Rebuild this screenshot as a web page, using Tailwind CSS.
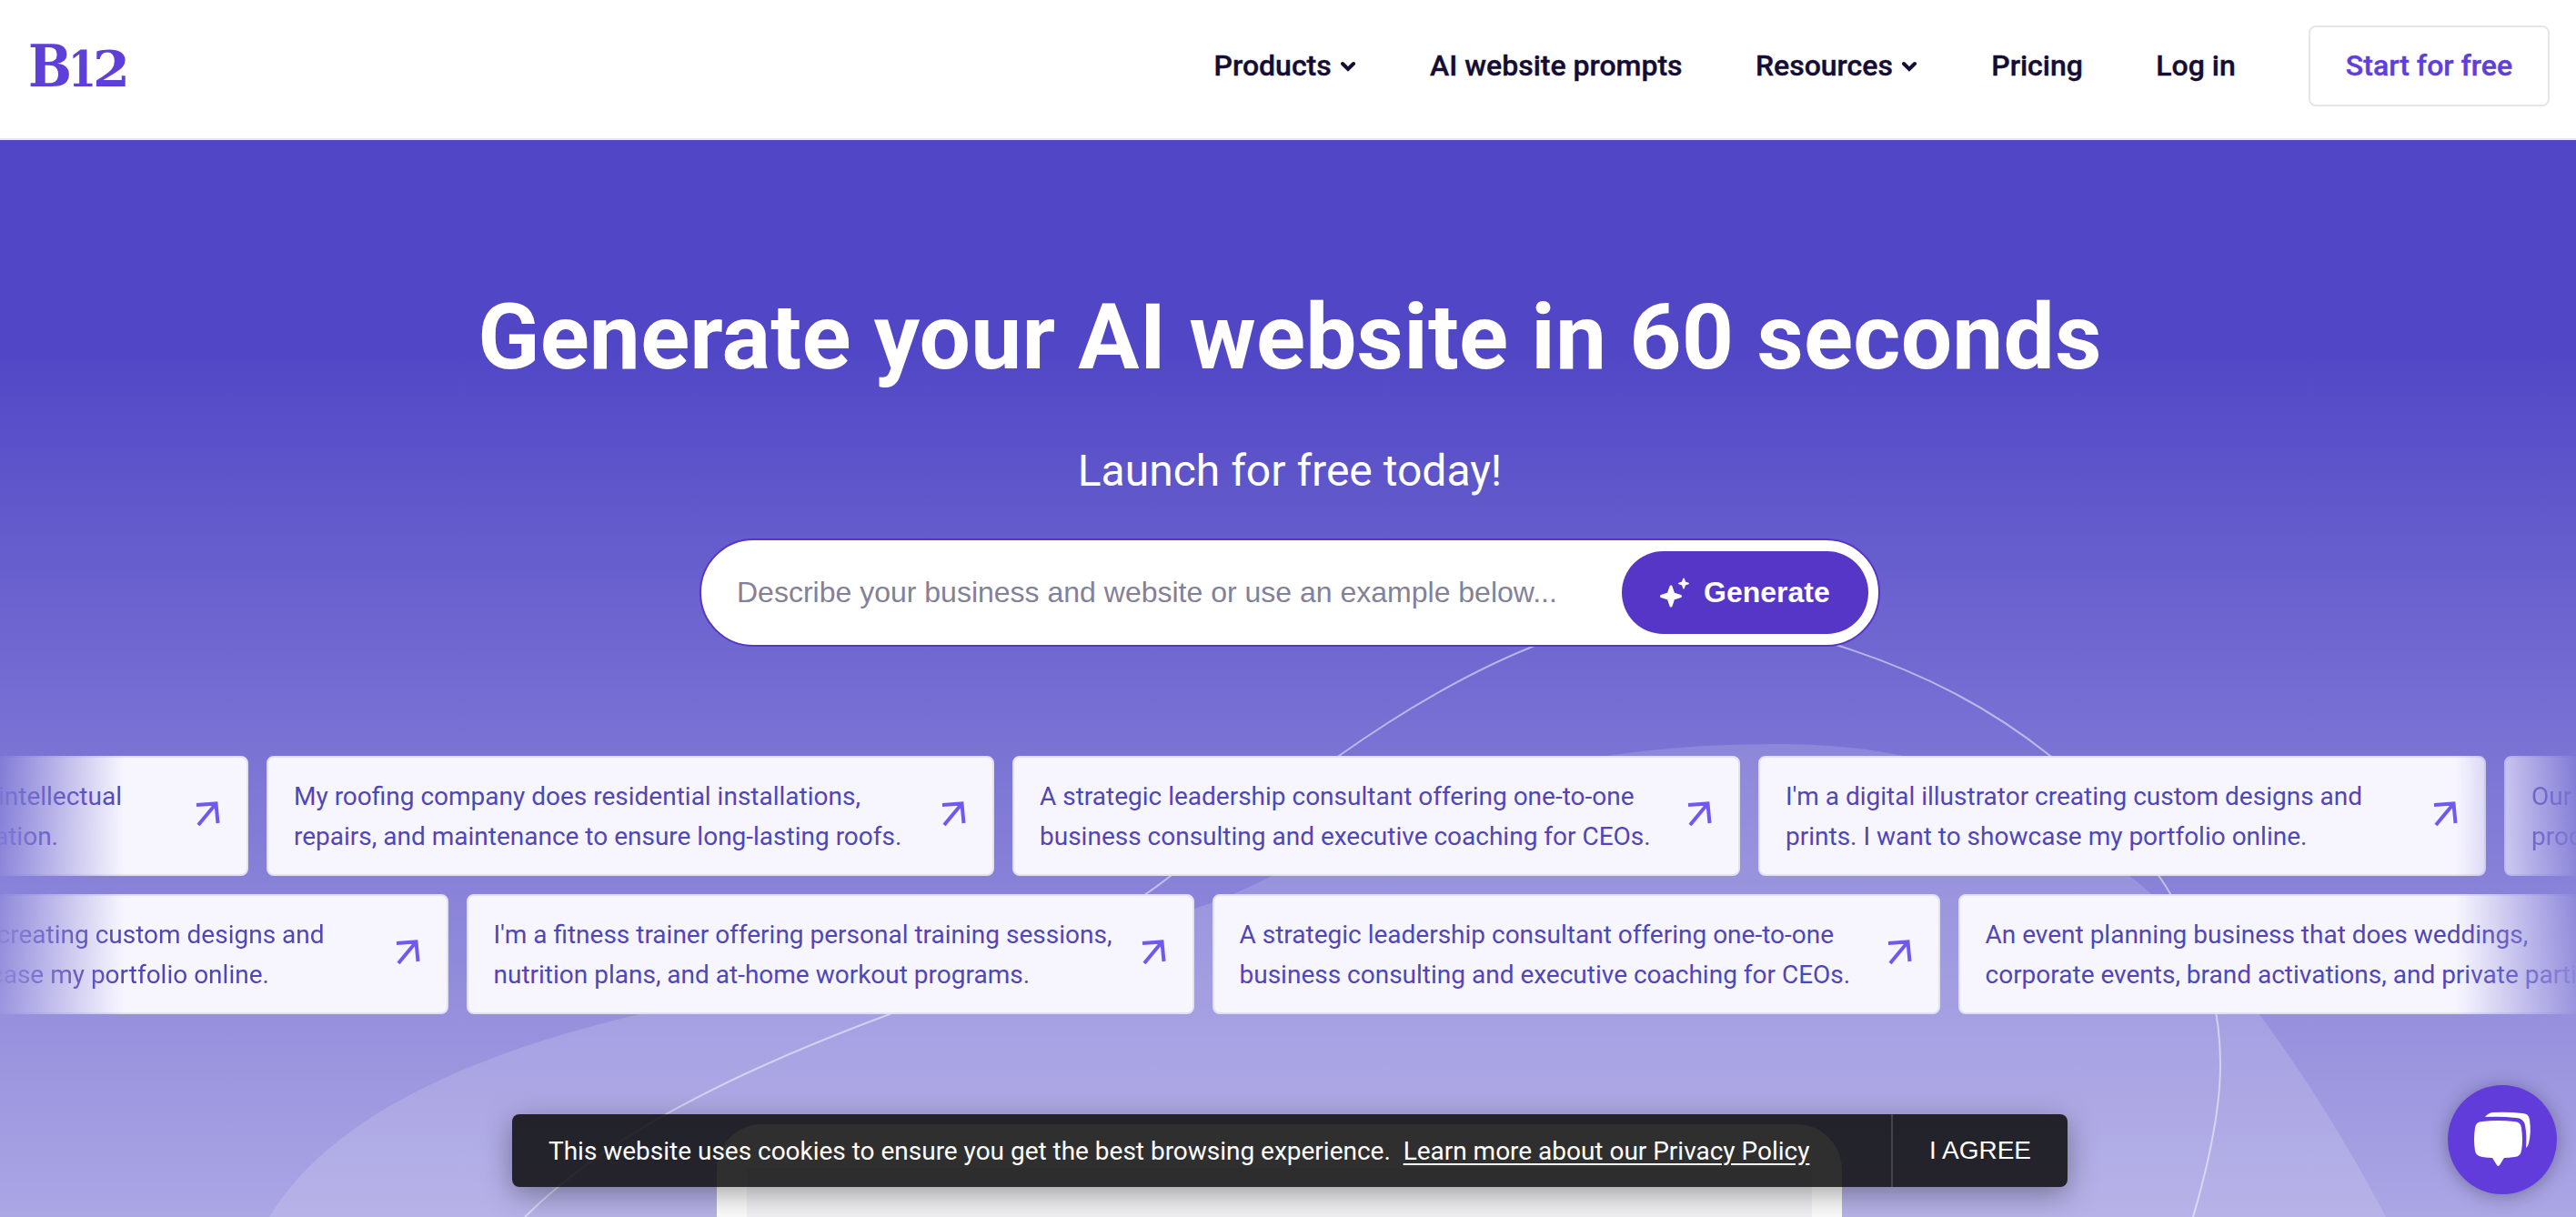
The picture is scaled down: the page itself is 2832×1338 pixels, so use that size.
<!DOCTYPE html>
<html lang="en">

<head>
    <meta charset="UTF-8">
    <meta name="viewport" content="width=device-width, initial-scale=1.0">
    <title>B12 | AI website builder</title>
    <script src="https://cdn.jsdelivr.net/npm/@tailwindcss/browser@4"></script>
</head>

<body class="font-['Roboto',sans-serif] w-[2832px] h-[1338px] overflow-hidden relative flex flex-col">
    <!-- Navbar -->
    <header class="h-[154px] shrink-0 bg-white border-b-2 border-[#e6e6e6] flex items-start justify-between pl-8 pr-[29px] pt-7">
        <svg class="w-[112px] h-[84px]" viewBox="32 28 112 84" role="img" aria-label="B12" font-family="DejaVu Serif" font-weight="bold" fill="#5f3fd9">
            <text x="31" y="95" font-size="63" textLength="48" lengthAdjust="spacingAndGlyphs">B</text>
            <text x="75" y="95" font-size="55" textLength="31" lengthAdjust="spacingAndGlyphs">1</text>
            <text x="102" y="95" font-size="55" textLength="41" lengthAdjust="spacingAndGlyphs">2</text>
        </svg>
        <nav class="flex items-center gap-[80.3px] h-[89px] text-[32px] font-medium text-[#150d33] [-webkit-text-stroke:0.4px]">
            <a class="flex items-center gap-[10px] -mt-[2px]">Products
                <svg class="w-[18px] h-3 mt-[2px]" viewBox="0 0 18 12" fill="none" stroke="currentColor" stroke-width="4" stroke-linecap="round"><path d="M2 3l6 6 6-6" /></svg>
            </a>
            <a class="-mt-[2px]">AI website prompts</a>
            <a class="flex items-center gap-[10px] -mt-[2px]">Resources
                <svg class="w-[18px] h-3 mt-[2px]" viewBox="0 0 18 12" fill="none" stroke="currentColor" stroke-width="4" stroke-linecap="round"><path d="M2 3l6 6 6-6" /></svg>
            </a>
            <a class="-mt-[2px]">Pricing</a>
            <a class="-mt-[2px]">Log in</a>
            <a class="h-[89px] w-[265px] flex items-center justify-center border-2 border-[#e6e6e6] rounded-lg pb-[2px] text-[#5f3fd9]">Start for free</a>
        </nav>
    </header>

    <!-- Hero -->
    <main class="relative flex-1 overflow-hidden flex flex-col items-center pl-1 bg-[linear-gradient(#5046c6_0px,#5046c6_220px,#aba6e4_1184px)]">
        <svg class="absolute left-0 top-0 w-[2832px] h-[1184px]" viewBox="0 154 2832 1184" fill="none">
            <path d="M296 1338C355 1240 490 1165 703 1115C1050 1045 1230 1050 1398 963C1560 870 1720 818 1955 818C2110 818 2240 860 2341 963C2435 1035 2540 1180 2623 1338Z" fill="#fff" fill-opacity=".15" />
            <path d="M577 1338C660 1255 790 1185 978 1115C1130 1058 1200 1030 1287 963L1472 831C1540 783 1620 735 1700 705C1800 670 1950 685 2025 711C2120 742 2190 780 2254 831C2400 960 2441 1070 2441 1170C2441 1220 2428 1280 2411 1338" stroke="#fff" stroke-opacity=".5" stroke-width="2" />
        </svg>

        <h1 class="relative mt-[157px] text-[100px] leading-[120px] tracking-[0.22px] font-bold text-white">Generate your AI website in 60 seconds</h1>
        <p class="relative mt-[57px] text-[48px] leading-[60px] text-white">Launch for free today!</p>

        <div class="relative mt-[44px] w-[1298px] h-[119px] rounded-full border-2 border-[#5636c6] bg-white flex items-center justify-between pl-[39px] pr-[11px] font-['Liberation_Sans',sans-serif] text-[32px]">
            <span class="text-[#83819a] -mt-[2px]">Describe your business and website or use an example below...</span>
            <button class="w-[271px] h-[91px] rounded-full bg-[#5636c6] text-white font-bold flex items-center pl-[41px]">
                <svg class="w-9 h-9 mr-[13px]" viewBox="0 0 36 36" fill="#fff" stroke="#fff" stroke-linejoin="round">
                    <path stroke-width="3" d="M13 11l2.700 7.800L23.500 21.500l-7.800 2.700L13 32l-2.700-7.800L2.500 21.500l7.800-2.700z" />
                    <path stroke-width="1.5" d="M27 2.300l1.400 3.800L32.200 7.500l-3.800 1.400L27 12.700l-1.400-3.800L21.800 7.500l3.800-1.400z" />
                </svg>
                <span class="-mt-[2px]">Generate</span>
            </button>
        </div>

        <!-- Example prompts -->
        <div id="prompts" class="absolute top-[677px] left-0 w-full flex flex-col gap-5 overflow-hidden text-[28px] leading-[44px] text-[#5046b8] [mask-image:linear-gradient(90deg,rgba(0,0,0,0.06),#000_136px,#000_2700px,rgba(0,0,0,0.06))]"></div>

        <!-- Preview panel -->
        <div class="absolute left-[788px] top-[1082px] w-[1237px] h-[140px] rounded-t-[50px] bg-[#fcfcfc] px-[33px] pt-12">
            <div class="h-full bg-[#f1f1f4]"></div>
        </div>
    </main>

    <!-- Cookie notice -->
    <div class="absolute left-[563px] top-[1225px] w-[1710px] h-20 rounded-lg bg-[#0b0b0b]/85 shadow-[0_8px_32px_rgba(0,0,0,0.35)] flex items-center text-white text-[28px]">
        <p class="flex-1 pl-10 pt-[2px] whitespace-pre tracking-[-0.015px]">This website uses cookies to ensure you get the best browsing experience.  <a class="underline underline-offset-4">Learn more about our Privacy Policy</a></p>
        <button class="w-[194px] h-full border-l-2 border-[#44444d] font-['Liberation_Sans',sans-serif]">I AGREE</button>
    </div>

    <!-- Chat button -->
    <div class="absolute left-[2691px] top-[1193px] w-[120px] h-[120px] rounded-full bg-[#613cda] shadow-[0_2px_20px_rgba(0,0,0,0.3)]">
        <svg class="w-full h-full" viewBox="0 0 120 120" fill="#fff">
            <path d="M38 40Q55 38 73 40Q80 40 81 47Q83 60 81 72Q80 79 73 79Q67 80 62 80L57 88Q55.500 90 54 88L49 80Q44 80 38 79Q31 78 30 72Q28 60 30 47Q31 40 38 40Z" />
            <path d="M41 35Q44 31 49 30Q66 29 82 31Q89 31 90 38Q92 52 89 64Q88 68 86 69Q87 54 85 44Q83 36 75 36Q58 34 41 35Z" />
        </svg>
    </div>

    <script>
        const rows = [
            { offset: -527, items: [
                ['<span class="inline-block w-[631px] text-right">A law firm that focuses on patents, intellectual</span>', '<span class="inline-block w-[561px] text-right">property, licensing and litigation.</span>'],
                ['My roofing company does residential installations,', 'repairs, and maintenance to ensure long-lasting roofs.'],
                ['A strategic leadership consultant offering one-to-one', 'business consulting and executive coaching for CEOs.'],
                ["I'm a digital illustrator creating custom designs and", 'prints. I want to showcase my portfolio online.'],
                ['Our marketing agency helps brands', 'produce better campaigns.'],
            ] },
            { offset: -307.5, items: [
                ["I'm a digital illustrator creating custom designs and", 'prints. I want to showcase my portfolio online.'],
                ["I'm a fitness trainer offering personal training sessions,", 'nutrition plans, and at-home workout programs.'],
                ['A strategic leadership consultant offering one-to-one', 'business consulting and executive coaching for CEOs.'],
                ['An event planning business that does weddings,', 'corporate events, brand activations, and private parties.'],
            ] },
        ];

        document.getElementById('prompts').innerHTML = rows.map(row => `
            <div class="flex gap-5" style="margin-left:${row.offset}px">
                ${row.items.map(lines => `
                    <div class="w-[800px] h-[132px] shrink-0 rounded-lg border-2 border-[#e3e1f7] bg-[#f7f6fe] pl-7 pr-7 flex items-center justify-between whitespace-nowrap">
                        <p class="pt-[2px]">${lines.join('<br>')}</p>
                        <svg class="w-7 h-7 -mt-[6px]" viewBox="0 0 28 28" fill="none" stroke="#7059ef" stroke-width="4">
                            <path d="M1 5L22.500 3.500L24.500 25M22.500 3.500L3 27" />
                        </svg>
                    </div>`).join('')}
            </div>`).join('');
    </script>
</body>

</html>
